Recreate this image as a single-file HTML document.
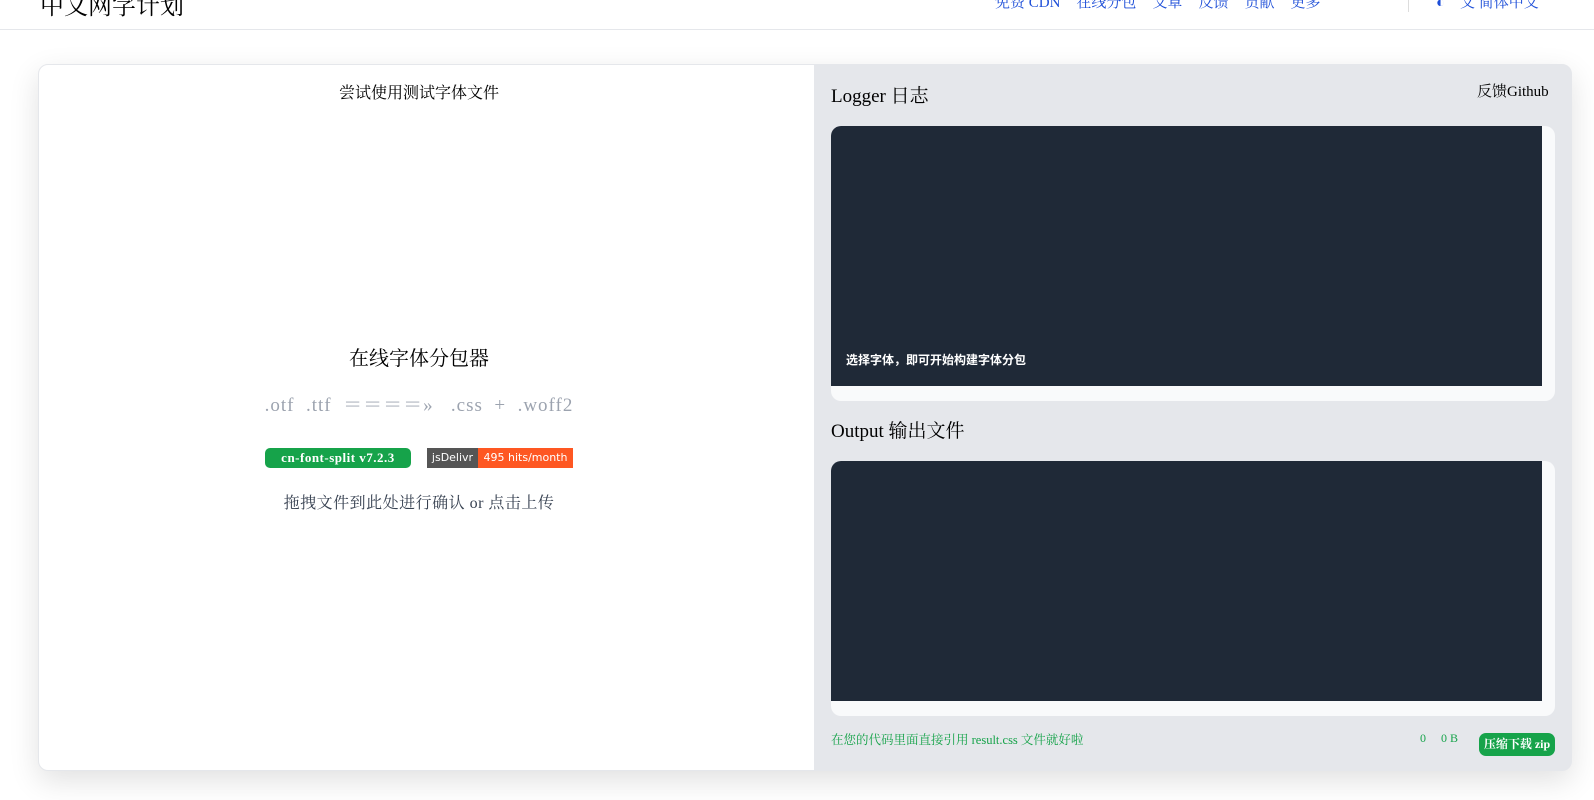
<!DOCTYPE html>
<html><head><meta charset="utf-8"><style>
*{margin:0;padding:0;box-sizing:border-box}
body{width:1594px;height:800px;overflow:hidden;background:#fff;font-family:"Liberation Serif","Noto Serif CJK SC",serif;position:relative;color:#000}
.hdr{position:absolute;left:0;top:0;width:1594px;height:30px;border-bottom:1px solid #e5e7eb;background:#fff}
.logo{position:absolute;left:40px;top:-14px;font-size:24px}
.nav{position:absolute;top:-9px;font-size:15px;color:#1d4ed8;white-space:nowrap}
.nav span{margin-right:16px}
.card{position:absolute;left:38px;top:64px;width:1534px;height:707px;border:1px solid #e5e7eb;border-radius:10px;background:#e5e7eb;box-shadow:0 10px 30px rgba(0,0,0,.12);overflow:hidden}
.left{position:absolute;left:0;top:0;width:775px;height:100%;background:#fff}
.c{position:absolute;left:0;width:760px;text-align:center;white-space:nowrap}
.abs{position:absolute;white-space:nowrap}
.dark{position:absolute;background:#1f2937}
.wrap{position:absolute;background:#f9fafb;border-radius:10px;overflow:hidden}
</style></head><body>
<div class="hdr">
<div class="logo">中文网字计划</div>
<div class="nav" style="left:995px"><span>免费 CDN</span><span>在线分包</span><span>文章</span><span>反馈</span><span>贡献</span><span>更多</span></div>
<div style="position:absolute;left:1408px;top:0;width:1px;height:12px;background:#ddd"></div>
<div class="nav" style="left:1436px">◐&nbsp;&nbsp;&nbsp; 文 简体中文</div>
</div>
<div class="card">
<div class="left">
<div class="c" style="top:15px;font-size:16px">尝试使用测试字体文件</div>
<div class="c" style="top:277px;font-size:20px">在线字体分包器</div>
<div class="c" style="top:325px;font-size:19px;color:#9ca3af;letter-spacing:1px">.otf&nbsp; .ttf&nbsp; ＝＝＝＝»&nbsp;&nbsp; .css&nbsp; +&nbsp; .woff2</div>
<div class="abs" style="left:226px;top:383px;width:146px;height:20px;background:#16a34a;border-radius:5px;color:#fff;font-weight:bold;font-size:13px;text-align:center;line-height:20px;letter-spacing:.5px">cn-font-split v7.2.3</div>
<div class="abs" style="left:388px;top:383px;width:51px;height:20px;background:#555;color:#fff;font-family:'DejaVu Sans',sans-serif;font-size:11px;line-height:20px;text-align:center">jsDelivr</div>
<div class="abs" style="left:439px;top:383px;width:95px;height:20px;background:#fe5722;color:#fff;font-family:'DejaVu Sans',sans-serif;font-size:11px;line-height:20px;text-align:center">495 hits/month</div>
<div class="c" style="top:425px;font-size:16px;color:#374151;letter-spacing:.5px">拖拽文件到此处进行确认 or 点击上传</div>
</div>
<div class="abs" style="left:792px;top:16px;font-size:19px">Logger 日志</div>
<div class="abs" style="left:1438px;top:15px;font-size:15px">反馈Github</div>
<div class="wrap" style="left:792px;top:61px;width:724px;height:275px"><div class="dark" style="left:0;top:0;width:711px;height:260px"></div>
<div class="abs" style="left:15px;top:225px;color:#fff;font-size:12px;font-family:'Liberation Sans','Noto Sans CJK SC',sans-serif;font-weight:bold">选择字体，即可开始构建字体分包</div></div>
<div class="abs" style="left:792px;top:351px;font-size:19px">Output 输出文件</div>
<div class="wrap" style="left:792px;top:396px;width:724px;height:255px"><div class="dark" style="left:0;top:0;width:711px;height:240px"></div></div>
<div class="abs" style="left:792px;top:665px;font-size:12.5px;color:#16a34a">在您的代码里面直接引用 result.css 文件就好啦</div>
<div class="abs" style="left:1381px;top:666px;font-size:12px;color:#16a34a">0&nbsp;&nbsp;&nbsp;&nbsp; 0 B</div>
<div class="abs" style="left:1440px;top:668px;width:76px;height:23px;background:#16a34a;border-radius:7px;color:#fff;font-size:12px;font-weight:bold;text-align:center;line-height:23px">压缩下载 zip</div>
</div>
</body></html>
